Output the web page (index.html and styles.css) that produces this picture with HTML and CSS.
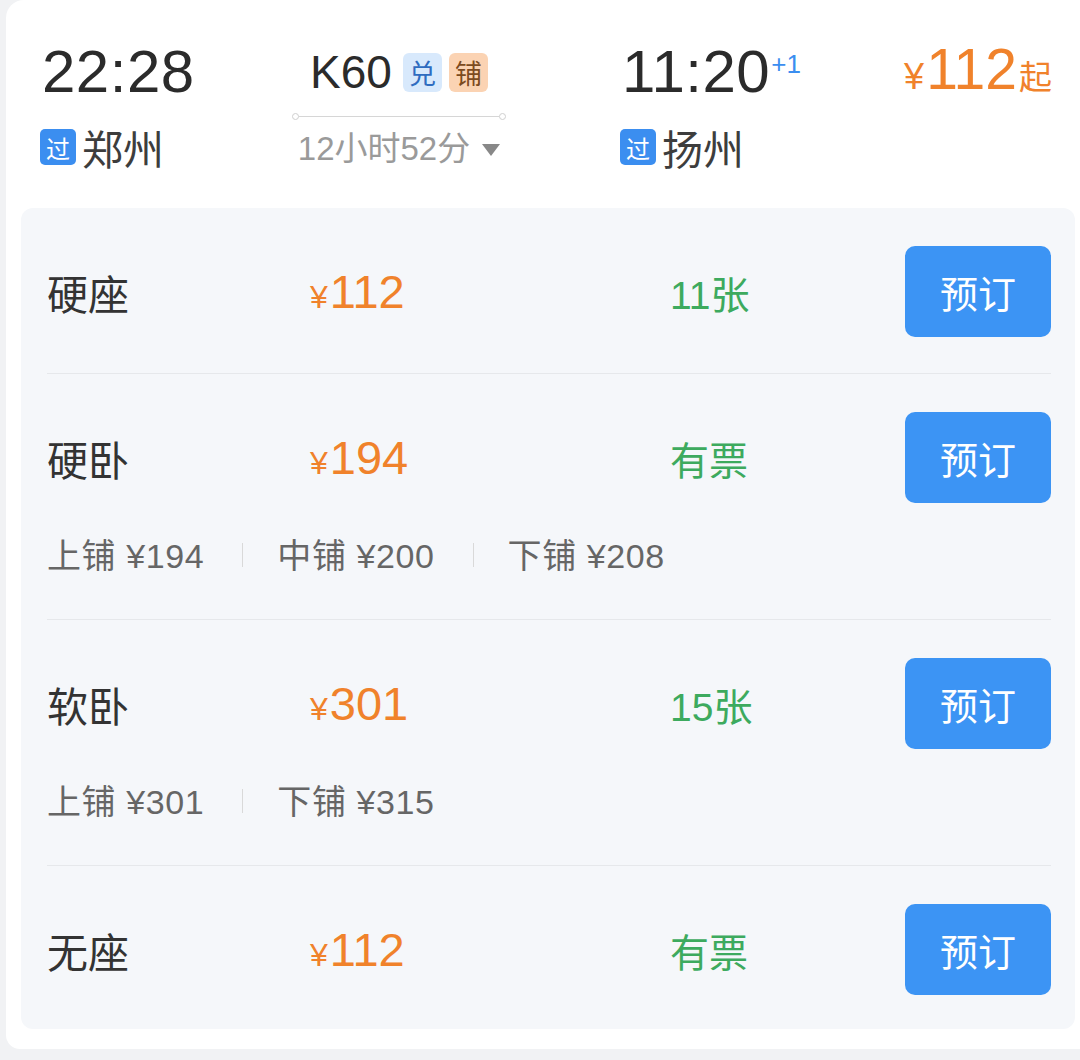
FILE: index.html
```html
<!DOCTYPE html>
<html lang="zh-CN">
<head>
<meta charset="utf-8">
<link rel="stylesheet" href="styles.css">
</head>
<body>
<div class="card">
  <div class="head">
    <div class="col dep">
      <div class="time">22:28</div>
      <div class="station"><span class="pass">过</span>郑州</div>
    </div>
    <div class="col mid">
      <div class="train">K60<span class="tag tag-blue">兑</span><span class="tag tag-orange">铺</span></div>
      <div class="line"><i class="dot"></i><i class="bar"></i><i class="dot"></i></div>
      <div class="dur">12小时52分<span class="tri"></span></div>
    </div>
    <div class="col arr">
      <div class="time">11:20<span class="plus">+1</span></div>
      <div class="station"><span class="pass">过</span>扬州</div>
    </div>
    <div class="col price-col">
      <div class="from"><span class="yen">¥</span><span class="num">112</span><span class="qi">起</span></div>
    </div>
  </div>

  <div class="panel">
    <div class="seat">
      <div class="main">
        <div class="name">硬座</div>
        <div class="price"><span class="y">¥</span>112</div>
        <div class="avail">11张</div>
        <div class="btn">预订</div>
      </div>
    </div>
    <div class="seat">
      <div class="main">
        <div class="name">硬卧</div>
        <div class="price"><span class="y">¥</span>194</div>
        <div class="avail">有票</div>
        <div class="btn">预订</div>
      </div>
      <div class="sub">
        <span>上铺 ¥194</span><i class="sep"></i><span>中铺 ¥200</span><i class="sep"></i><span>下铺 ¥208</span>
      </div>
    </div>
    <div class="seat">
      <div class="main">
        <div class="name">软卧</div>
        <div class="price"><span class="y">¥</span>301</div>
        <div class="avail">15张</div>
        <div class="btn">预订</div>
      </div>
      <div class="sub">
        <span>上铺 ¥301</span><i class="sep"></i><span>下铺 ¥315</span>
      </div>
    </div>
    <div class="seat">
      <div class="main">
        <div class="name">无座</div>
        <div class="price"><span class="y">¥</span>112</div>
        <div class="avail">有票</div>
        <div class="btn">预订</div>
      </div>
    </div>
  </div>
</div>
</body>
</html>
```

FILE: styles.css
```css
* { box-sizing: border-box; }
html, body { margin: 0; padding: 0; }
body {
  background: #f1f2f4;
  font-family: "Liberation Sans", "Noto Sans CJK SC", sans-serif;
  color: #333;
  width: 1080px;
  height: 1060px;
  overflow: hidden;
}
.card {
  margin-left: 6px;
  background: #fff;
  border-radius: 18px 0 0 14px;
  padding: 0 5px 20px 15px;
}
.head {
  display: flex;
  padding: 42px 23px 41px 21px;
}
.col { display: flex; flex-direction: column; }
.dep { width: 250px; }
.mid { width: 214px; align-items: center; }
.arr { margin-left: 116px; }
.price-col { margin-left: auto; }
.time {
  font-size: 60px;
  line-height: 60px;
  height: 60px;
  color: #2b2b2b;
  letter-spacing: 0.5px;
  white-space: nowrap;
}
.plus {
  font-size: 26px;
  line-height: 0;
  color: #3b8ef0;
  vertical-align: 19px;
  margin-left: 1px;
  letter-spacing: 0;
}
.station {
  margin-top: 25px;
  height: 40px;
  display: flex;
  align-items: center;
  font-size: 41px;
  color: #3d3d3d;
  font-family: "Noto Sans CJK SC", sans-serif;
}
.pass {
  width: 36px;
  height: 36px;
  border-radius: 5px;
  background: #3b8ef0;
  color: #fff;
  font-size: 24px;
  display: flex;
  align-items: center;
  justify-content: center;
  margin-right: 6px;
  margin-left: -2px;
}
.train {
  height: 60px;
  display: flex;
  align-items: center;
  font-size: 46px;
  color: #2b2b2b;
}
.tag {
  width: 39px;
  height: 39px;
  border-radius: 6px;
  display: flex;
  align-items: center;
  justify-content: center;
  font-size: 27px;
  font-family: "Noto Sans CJK SC", sans-serif;
}
.tag-blue { background: #d8e9fc; color: #2f6cc0; margin-left: 11px; }
.tag-orange { background: #fbd3b3; color: #7c4a20; margin-left: 7px; }
.line {
  margin-top: 11px;
  width: 214px;
  display: flex;
  align-items: center;
}
.line .bar { flex: 1; height: 1px; background: #d6d6d6; }
.line .dot {
  width: 7px; height: 7px;
  border: 1px solid #cfcfcf;
  border-radius: 50%;
  background: #fff;
}
.dur {
  margin-top: 11px;
  height: 36px;
  line-height: 36px;
  font-size: 33px;
  color: #9a9a9a;
  display: flex;
  align-items: center;
  white-space: nowrap;
}
.tri {
  width: 0; height: 0;
  border-left: 9px solid transparent;
  border-right: 9px solid transparent;
  border-top: 12px solid #888;
  margin-left: 12px;
  margin-top: 2px;
}
.from {
  color: #f0822b;
  line-height: 60px;
  height: 60px;
  white-space: nowrap;
  margin-top: -3px;
}
.from .yen { font-size: 36px; }
.from .num { font-size: 57px; margin-left: 2px; }
.from .qi { font-size: 33px; font-family: "Noto Sans CJK SC", sans-serif; margin-left: 2px; }

.panel {
  background: #f5f7fa;
  border-radius: 12px;
  padding: 0 24px 0 26px;
}
.seat { border-bottom: 1px solid #e6e8eb; padding: 38px 0 36px; }
.seat:last-child { border-bottom: none; padding-bottom: 34px; }
.main {
  display: grid;
  grid-template-columns: 263px 360px 1fr 146px;
  align-items: center;
  height: 91px;
}
.name {
  font-size: 41px;
  color: #333;
  font-family: "Noto Sans CJK SC", sans-serif;
}
.price {
  font-size: 47px;
  color: #f0822b;
}
.price .y { font-size: 32px; margin-right: 2px; }
.avail {
  font-size: 39px;
  color: #3daa5e;
}
.btn {
  height: 91px;
  background: #3c94f4;
  border-radius: 10px;
  color: #fff;
  font-size: 38px;
  display: flex;
  align-items: center;
  justify-content: center;
  font-family: "Noto Sans CJK SC", sans-serif;
}
.sub {
  margin-top: 23px;
  margin-bottom: 3px;
  height: 54px;
  display: flex;
  align-items: center;
  font-size: 34px;
  color: #666;
  white-space: nowrap;
  letter-spacing: 0.6px;
}
.sep {
  width: 1px;
  height: 24px;
  background: #d9d9d9;
  margin: 4px 34px 0 38px;
}
```
